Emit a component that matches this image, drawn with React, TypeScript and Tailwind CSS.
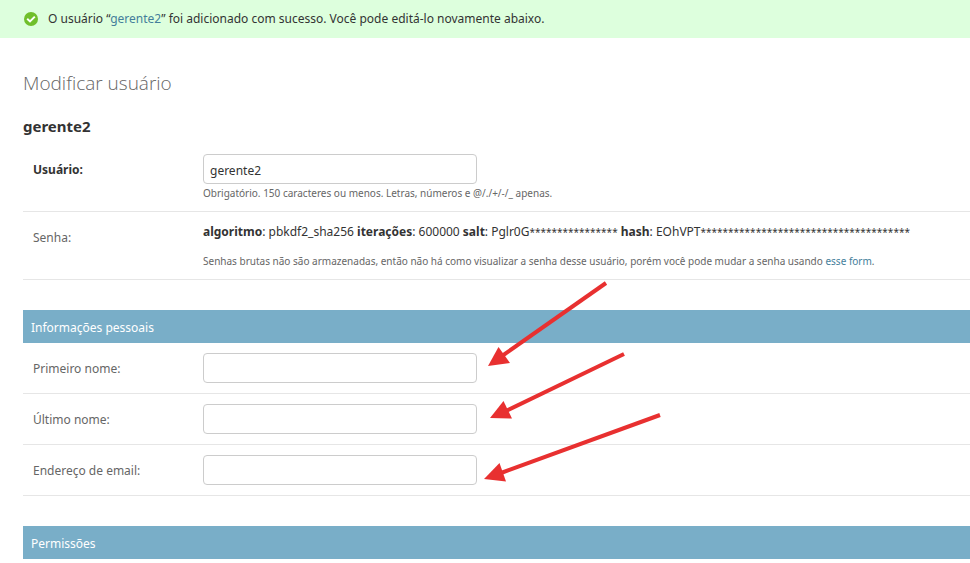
import React from "react";

type FieldProps = {
  id: string;
  label: string;
  type?: string;
};

const inputClass =
  "block h-[30px] w-[274px] rounded border border-[#ccc] bg-white px-1.5 pt-0.5 text-xs text-[#333] outline-none focus:border-[#999]";

const helpClass = "pt-0.5 text-[10px] leading-[15px] text-[#666]";

const Field = ({ id, label, type = "text" }: FieldProps) => (
  <div className="flex items-center border-b border-[#e6e6e6] p-2.5">
    <label htmlFor={id} className="w-[170px] shrink-0 pt-0.5 text-[#666]">
      {label}
    </label>
    <input id={id} name={id} type={type} className={inputClass} />
  </div>
);

const SectionTitle = ({ children }: { children: React.ReactNode }) => (
  <h2 className="mt-[30px] bg-[#79aec8] px-2 pt-2.5 pb-[7px] text-xs leading-4 text-white">
    {children}
  </h2>
);

const Mask = ({ length }: { length: number }) => (
  <span className="text-[10px]">{"*".repeat(length)}</span>
);

const Arrows = () => (
  <svg
    className="pointer-events-none absolute top-0 left-0"
    width="700"
    height="500"
    viewBox="0 0 700 500"
    aria-hidden="true"
  >
    <g stroke="#e83030" strokeWidth="4">
      <path d="M606 283 L502 356" />
      <path d="M624 354 L506 411" />
      <path d="M660 415 L501 473" />
    </g>
    <g fill="#e83030">
      <path d="M488 366 L498.500 347 L510 363 Z" />
      <path d="M490 418 L503.500 401 L512 418.500 Z" />
      <path d="M484 479 L499.500 463 L506 481.500 Z" />
    </g>
  </svg>
);

export default function App() {
  return (
    <div className="relative min-h-screen overflow-x-hidden bg-white font-['Noto_Sans','Open_Sans',sans-serif] text-xs leading-[18px] text-[#333]">
      <div className="flex items-center gap-2.5 bg-[#ddffdd] py-2.5 pl-6">
        <svg width="14" height="14" viewBox="0 0 14 14" aria-hidden="true">
          <circle cx="7" cy="7" r="7" fill="#70bf2b" />
          <path
            d="M3.200 6.800 L6 9.400 L10.800 4.600"
            fill="none"
            stroke="#fff"
            strokeWidth="2"
          />
        </svg>
        <p>
          O usuário “
          <a href="#" className="text-[#447e9b]">
            gerente2
          </a>
          ” foi adicionado com sucesso. Você pode editá-lo novamente abaixo.
        </p>
      </div>

      <main className="pt-8 pl-[23px]">
        <h1 className="font-['Open_Sans',sans-serif] text-[19px] leading-[26px] font-light text-[#666]">
          Modificar usuário
        </h1>
        <h2 className="mt-5 text-[15px] leading-5 font-bold">gerente2</h2>

        <form className="mt-2">
          <div className="flex items-start border-b border-[#e6e6e6] p-2.5">
            <label
              htmlFor="username"
              className="w-[170px] shrink-0 leading-8 font-bold"
            >
              Usuário:
            </label>
            <div>
              <input
                id="username"
                name="username"
                type="text"
                defaultValue="gerente2"
                className={inputClass}
              />
              <p className={helpClass}>
                Obrigatório. 150 caracteres ou menos. Letras, números e
                @/./+/-/_ apenas.
              </p>
            </div>
          </div>

          <div className="flex items-start border-b border-[#e6e6e6] p-2.5">
            <span className="w-[170px] shrink-0 leading-8 text-[#666]">
              Senha:
            </span>
            <div>
              <p className="leading-5 whitespace-nowrap">
                <strong>algoritmo</strong>: pbkdf2_sha256{" "}
                <strong>iterações</strong>: 600000 <strong>salt</strong>:
                Pglr0G
                <Mask length={16} /> <strong>hash</strong>: EOhVPT
                <Mask length={38} />
              </p>
              <p className={`${helpClass} mt-2.5`}>
                Senhas brutas não são armazenadas, então não há como visualizar
                a senha desse usuário, porém você pode mudar a senha usando{" "}
                <a href="#" className="text-[#447e9b]">
                  esse form
                </a>
                .
              </p>
            </div>
          </div>

          <SectionTitle>Informações pessoais</SectionTitle>
          <Field id="first_name" label="Primeiro nome:" />
          <Field id="last_name" label="Último nome:" />
          <Field id="email" label="Endereço de email:" type="email" />

          <SectionTitle>Permissões</SectionTitle>
        </form>
      </main>

      <Arrows />
    </div>
  );
}
